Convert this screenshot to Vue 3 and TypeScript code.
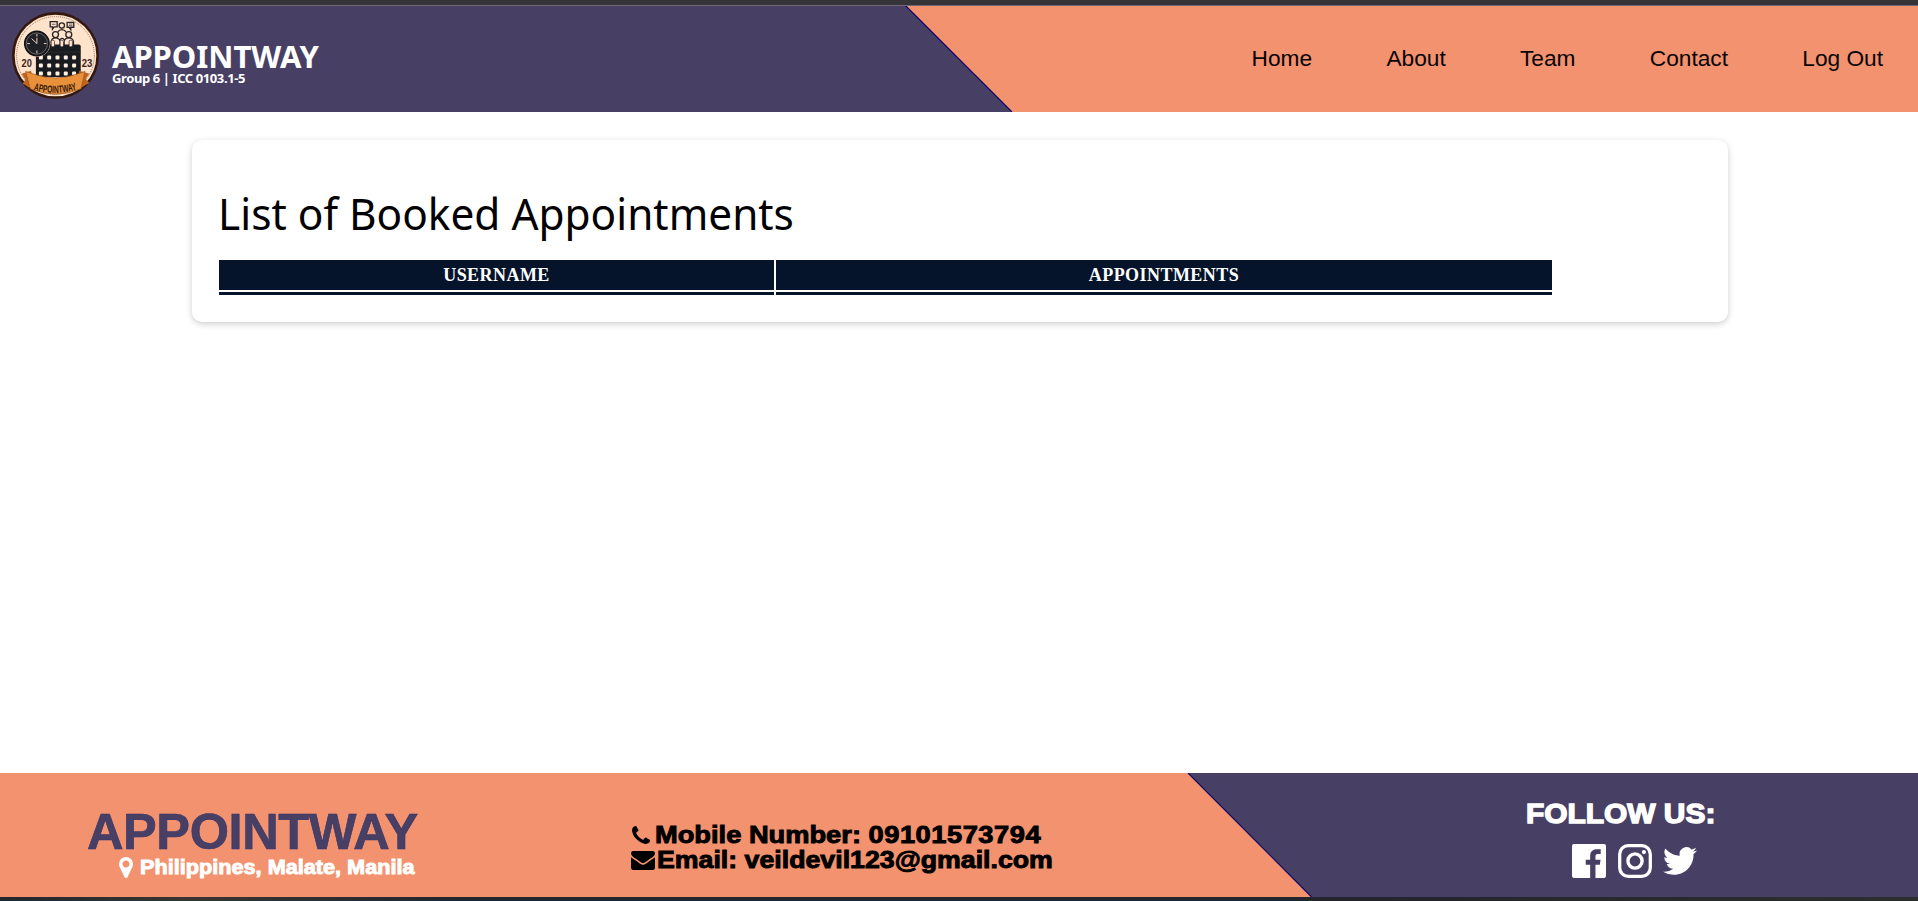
<script setup lang="ts">
const links: string[] = ['Home', 'About', 'Team', 'Contact', 'Log Out']
const columns: string[] = ['USERNAME', 'APPOINTMENTS']
const rows = [0, 1, 2]
const cols = [0, 1, 2, 3, 4]
</script>

<template>
  <div class="page">
    <div class="edge-top"></div>
    <header class="header">
      <svg class="slant" viewBox="0 0 1918 107" preserveAspectRatio="none">
        <path d="M0 0H906L1012 107H0Z" fill="#483f65" />
        <path d="M906 0L1012 107" stroke="#08006c" stroke-width="1.1" />
      </svg>
      <div class="brand">
        <svg class="logo" viewBox="36 36 262 262">
          <circle cx="167" cy="167" r="127" fill="#ffe3cb" stroke="#35190f" stroke-width="8" />
          <circle cx="167" cy="167" r="117" fill="none" stroke="#5e4233" stroke-width="2" stroke-dasharray="3 3" />
          <g fill="none" stroke="#2a2528" stroke-width="4">
            <path d="M151 65H172V81H163L158 88V81H151ZM222 67H202V82H208L213 89V82H222Z" />
            <path d="M156 73H167M207 72H218M207 77H218" stroke-width="2" />
            <circle cx="186" cy="77" r="8" />
            <circle cx="167" cy="104" r="9" />
            <circle cx="207" cy="104" r="9" />
            <path d="M174 96Q178 89 186 89T199 96M154 137V124Q156 114 167 114T181 124V137M193 137V124Q196 114 207 114T221 124V137M181 119Q187 112 193 119" />
          </g>
          <path d="M108 140Q108 134 114 134H237Q243 134 243 140V232H108Z" fill="#181b20" />
          <g fill="#ffe3cb" stroke="#181b20" stroke-width="2">
            <rect x="154" y="121" width="10" height="20" rx="4" />
            <rect x="181" y="121" width="10" height="20" rx="4" />
            <rect x="208" y="121" width="10" height="20" rx="4" />
          </g>
          <path d="M108 157H243" stroke="#393334" stroke-width="2" />
          <g fill="#fff0df">
            <template v-for="r in rows" :key="r">
              <rect v-for="c in cols" :key="c" :x="117 + c * 25" :y="167 + r * 24" width="12" height="12" rx="3" />
            </template>
          </g>
          <circle cx="111" cy="131" r="40" fill="#ffe3cb" />
          <circle cx="111" cy="131" r="37" fill="#202126" stroke="#101216" stroke-width="4" />
          <circle cx="111" cy="131" r="32" fill="none" stroke="#858080" stroke-width="2" />
          <path d="M111 102V110M111 152V160M82 131H90M132 131H140M111 131L95 116M111 131V114" stroke="#e7d4c5" stroke-width="3" />
          <text x="65" y="201" class="year" textLength="31" lengthAdjust="spacingAndGlyphs">20</text>
          <text x="246" y="201" class="year" textLength="32" lengthAdjust="spacingAndGlyphs">23</text>
          <path d="M65 222L93 213L100 238L86 263Q77 256 68 252L76 240ZM269 222L239 213L232 238L246 263Q257 256 269 250L258 238Z" fill="#bc6620" />
          <path d="M77 215L98 222Q167 247 235 222L256 215L244 267Q167 300 91 267Z" fill="#e8913a" stroke="#98501c" stroke-width="2" />
          <path id="ribbon" d="M101 271Q167 289 233 269" fill="none" />
          <text class="ribbon-name"><textPath href="#ribbon" textLength="132" lengthAdjust="spacingAndGlyphs">APPOINTWAY</textPath></text>
        </svg>
        <div class="brand-text">
          <div class="brand-name">APPOINTWAY</div>
          <div class="brand-sub">Group 6 | ICC 0103.1-5</div>
        </div>
      </div>
      <nav class="nav">
        <a v-for="link in links" :key="link">{{ link }}</a>
      </nav>
    </header>

    <main class="main">
      <section class="card">
        <h1><span>List of Booked Appointments</span></h1>
        <div class="table">
          <div v-for="name in columns" :key="name" class="th">{{ name }}</div>
          <div v-for="name in columns" :key="name + '-cell'" class="td"></div>
        </div>
      </section>
    </main>

    <footer class="footer">
      <svg class="slant" viewBox="0 0 1918 124" preserveAspectRatio="none">
        <path d="M1188 0H1918V124H1311.500Z" fill="#483f65" />
        <path d="M1188 0L1311.500 124" stroke="#08006c" stroke-width="1.1" />
      </svg>
      <div class="place">
        <div class="place-name">APPOINTWAY</div>
        <div class="place-line">
          <svg class="pin" viewBox="384 128 1024 1536"><path fill="#fff" d="M1152 640q0-106-75-181t-181-75-181 75-75 181 75 181 181 75 181-75 75-181zm256 0q0 109-33 179l-364 774q-16 33-47.500 52t-67.500 19-67.500-19-46.500-52l-365-774q-33-70-33-179 0-212 150-362t362-150 362 150 150 362z" /></svg>
          <span>Philippines, Malate, Manila</span>
        </div>
      </div>
      <div class="contact">
        <div class="contact-line">
          <svg class="phone" viewBox="192 128 1408 1408"><path d="M1600 1240q0 27-10 70.500t-21 68.500q-21 50-122 106-94 51-186 51-27 0-53-3.500t-57.500-12.500-47-14.500-55.500-20.500-49-18q-98-35-175-83-127-79-264-216t-216-264q-48-77-83-175-3-9-18-49t-20.500-55.500-14.500-47-12.500-57.500-3.500-53q0-92 51-186 56-101 106-122 25-11 68.500-21t70.500-10q14 0 21 3 18 6 53 76 11 19 30 54t35 63.500 31 53.500q3 4 17.500 25t21.500 35.500 7 28.500q0 20-28.500 50t-62 55-62 53-28.500 46q0 9 5 22.500t8.500 20.500 14 24 11.500 19q76 137 174 235t235 174q2 1 19 11.500t24 14 20.500 8.500 22.500 5q18 0 46-28.500t53-62 55-62 50-28.500q14 0 28.500 7t35.500 21.500 25 17.500q25 15 53.500 31t63.500 35 54 30q70 35 76 53 3 7 3 21z" /></svg>
          <span class="mobile">Mobile Number: <b>09101573794</b></span>
        </div>
        <div class="contact-line">
          <svg class="mail" viewBox="0 256 1792 1408"><path d="M1792 710v794q0 66-47 113t-113 47h-1472q-66 0-113-47t-47-113v-794q44 49 101 87 362 246 497 345 57 42 92.500 65.500t94.500 48 110 24.500h2q51 0 110-24.500t94.500-48 92.500-65.500q170-123 498-345 57-39 100-87zm0-294q0 79-49 151t-122 123q-376 261-468 325-10 7-42.500 31t-54 38.500-52 32.500-57.500 27-50 9h-2q-23 0-50-9t-57.500-27-52-32.500-54-38.500-42.500-31q-91-64-262-182.500t-205-142.500q-62-42-117-115.500t-55-136.500q0-78 41.500-130t118.500-52h1472q65 0 112.500 47t47.500 113z" /></svg>
          <span class="email">Email: veildevil123@gmail.com</span>
        </div>
      </div>
      <div class="follow">
        <div class="follow-title">FOLLOW US:</div>
        <div class="social">
          <svg viewBox="0 0 24 24"><path fill="#fff" d="M22.676 0H1.324C.593 0 0 .593 0 1.324v21.352C0 23.408.593 24 1.324 24h11.494v-9.294H9.689v-3.621h3.129V8.410c0-3.099 1.894-4.785 4.659-4.785 1.325 0 2.464.097 2.796.141v3.240h-1.921c-1.500 0-1.792.721-1.792 1.771v2.311h3.584l-.465 3.630H16.560V24h6.115c.733 0 1.325-.592 1.325-1.324V1.324C24 .593 23.408 0 22.676 0" /></svg>
          <svg viewBox="0 0 24 24"><rect x="1.200" y="1.200" width="21.600" height="21.600" rx="6" fill="none" stroke="#fff" stroke-width="2.300" /><circle cx="12" cy="12" r="5" fill="none" stroke="#fff" stroke-width="2.400" /><circle cx="18.300" cy="5.700" r="1.500" fill="#fff" /></svg>
          <svg viewBox="0 0 24 24"><path fill="#fff" d="M23.953 4.570a10 10 0 01-2.825.775 4.958 4.958 0 002.163-2.723c-.951.555-2.005.959-3.127 1.184a4.920 4.920 0 00-8.384 4.482C7.690 8.095 4.067 6.130 1.640 3.162a4.822 4.822 0 00-.666 2.475c0 1.710.870 3.213 2.188 4.096a4.904 4.904 0 01-2.228-.616v.060a4.923 4.923 0 003.946 4.827 4.996 4.996 0 01-2.212.085 4.936 4.936 0 004.604 3.417 9.867 9.867 0 01-6.102 2.105c-.390 0-.779-.023-1.170-.067a13.995 13.995 0 007.557 2.209c9.053 0 13.998-7.496 13.998-13.985 0-.210 0-.420-.015-.630A9.935 9.935 0 0024 4.590z" /></svg>
        </div>
      </div>
    </footer>
    <div class="edge-bottom"></div>
  </div>
</template>

<style scoped>
.page {
  display: flex;
  flex-direction: column;
  width: 1918px;
  height: 901px;
  overflow: hidden;
  background: #fff;
  font-family: "Liberation Sans", Arial, sans-serif;
}
.page > * { flex: none; box-sizing: border-box; }
.edge-top { height: 5px; background: #353539; }
.edge-bottom { height: 4px; background: linear-gradient(90deg, #25262d, #373632 10%, #25252e 24%, #25262d 76%, #2b2f30); }
.header {
  position: relative;
  display: flex;
  justify-content: space-between;
  height: 107px;
  background: #f2926f;
  border-top: 1px solid #706775;
}
.slant { position: absolute; inset: 0; width: 100%; height: 100%; }
.brand { position: relative; display: flex; padding: 6px 0 0 12px; }
.logo { width: 87px; height: 87px; }
.year { font: bold 34px "Liberation Sans", Arial, sans-serif; fill: #3a211b; }
.ribbon-name { font: bold 31px "Liberation Sans", Arial, sans-serif; fill: #381b10; }
.brand-text {
  margin: 30px 0 0 13px;
  color: #fff;
  font-family: "Noto Sans", sans-serif;
  font-weight: 700;
  white-space: nowrap;
}
.brand-name { font-size: 31px; line-height: 28px; letter-spacing: -0.050px; }
.brand-sub { font-size: 13px; line-height: 16px; letter-spacing: -0.400px; }
.nav {
  position: relative;
  display: flex;
  gap: 74.300px;
  padding: 38px 35px 0 0;
  font-size: 22.700px;
  line-height: 28px;
  color: #080406;
}
.main { height: 661px; padding: 28px 190px 0 192px; }
.card {
  box-sizing: border-box;
  height: 182px;
  padding: 43px 27px 0;
  border-radius: 10px;
  background: #fff;
  box-shadow: 0 2px 6px rgba(0, 0, 0, 0.2);
}
h1 {
  margin: 0 0 0 -1px;
  height: 77px;
  font: 400 44px/60px "Noto Sans", sans-serif;
  color: #000;
  white-space: nowrap;
}
h1 span { display: inline-block; transform: scaleX(0.963); transform-origin: 0 50%; }
.table {
  display: grid;
  grid-template-columns: 555px 776px;
  grid-template-rows: 30px 3px;
  gap: 2px;
}
.th {
  display: flex;
  align-items: center;
  justify-content: center;
  background: #05132b;
  color: #fff;
  font: bold 18px/20px "Liberation Serif", "Times New Roman", serif;
  letter-spacing: 0.450px;
}
.td { background: #05132b; }
.footer { position: relative; height: 124px; background: #f2926f; }
.footer {
  display: grid;
  grid-template-columns: 631px 895px 1fr;
}
.place, .contact, .follow { position: relative; white-space: nowrap; }
.place { padding: 36px 0 0 87px; }
.place-name {
  font-size: 50.500px;
  line-height: 46px;
  letter-spacing: -0.400px;
  font-weight: 700;
  color: #483f65;
  -webkit-text-stroke: 0.600px #33336a;
}
.place-line {
  display: flex;
  align-items: center;
  gap: 7px;
  padding-left: 32px;
  font-size: 19.600px;
  font-weight: 700;
  line-height: 24px;
  color: #fff;
}
.place-line span { -webkit-text-stroke: 0.900px #fff; transform: scaleX(1.106); transform-origin: 0 50%; }
.pin { width: 14px; height: 21px; }
.contact { padding-top: 50px; }
.contact-line { display: flex; align-items: center; height: 25px; font-size: 23.500px; font-weight: 700; color: #000; }
.contact-line span { -webkit-text-stroke: 0.900px #000; transform-origin: 0 50%; }
.contact-line b { letter-spacing: 0.450px; }
.phone { width: 18px; height: 18px; margin: -2px 5px 0 1px; }
.mail { width: 24px; height: 19px; margin-right: 2px; }
.mobile { transform: scaleX(1.160); }
.email { transform: scaleX(1.137); }
.follow { padding-top: 25px; color: #fff; }
.follow-title {
  font-size: 28px;
  font-weight: 700;
  line-height: 32px;
  -webkit-text-stroke: 1.400px #fff;
  transform: scaleX(1.068);
  transform-origin: 0 50%;
}
.social { display: flex; gap: 11.500px; padding: 14px 0 0 46px; }
.social svg { width: 34px; height: 34px; }
</style>

<style>
html, body { margin: 0; overflow: hidden; }
</style>
